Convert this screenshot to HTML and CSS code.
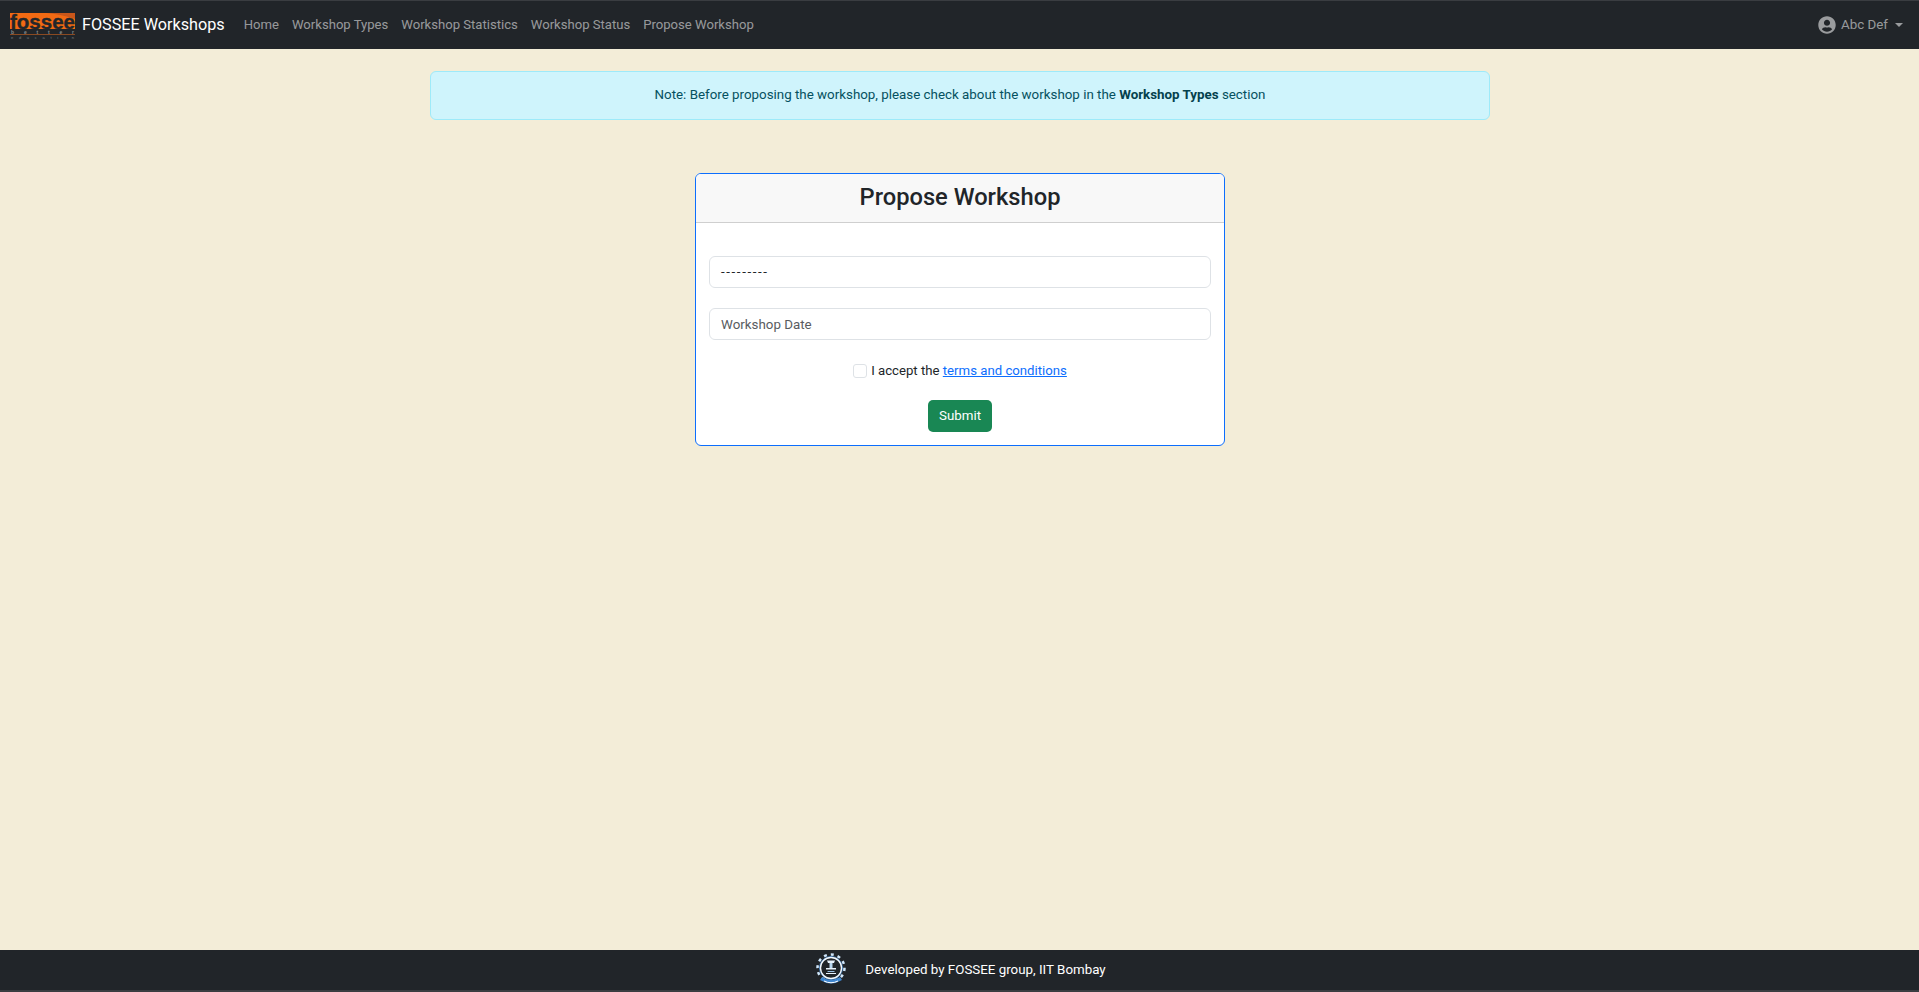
FILE: index.html
```html
<!DOCTYPE html>
<html>
<head>
  <meta charset="UTF-8">
  <title>Propose Workshop</title>
  <link rel="stylesheet" href="styles.css">
</head>
<body>
  <nav class="navbar">
    <a class="brand" href="#">
      <svg class="brand-logo" width="66" height="37" viewBox="0 -6 66 37">
        <rect x="0" y="0" width="65" height="16" fill="#f26a13"/>
        <path d="M36 0 L65 0 L65 6 Q50 1 36 0 Z" fill="#c9561a"/>
        <text x="0" y="16" class="logo-main">fossee</text>
        <rect x="0" y="21" width="65" height="1" fill="#8a4a22"/>
        <text x="1" y="20.5" class="logo-sub" textLength="63">better</text>
        <text x="1" y="25.5" class="logo-tiny" textLength="63">education</text>
      </svg>
      <span>FOSSEE Workshops</span>
    </a>
    <ul class="nav-links">
      <li><a href="#">Home</a></li>
      <li><a href="#">Workshop Types</a></li>
      <li><a href="#">Workshop Statistics</a></li>
      <li><a href="#">Workshop Status</a></li>
      <li><a href="#">Propose Workshop</a></li>
    </ul>
    <a class="user-menu" href="#">
      <svg width="18" height="18" viewBox="0 0 512 512" fill="currentColor">
        <path d="M256 8C119 8 8 119 8 256s111 248 248 248 248-111 248-248S393 8 256 8zm0 96c48.600 0 88 39.400 88 88s-39.400 88-88 88-88-39.400-88-88 39.400-88 88-88zm0 344c-58.700 0-111.300-26.600-146.500-68.200 18.800-35.400 55.600-59.800 98.500-59.800 2.400 0 4.800.4 7.100 1.100 13 4.200 26.600 6.900 40.900 6.900 14.300 0 28-2.700 40.900-6.900 2.300-.7 4.700-1.100 7.100-1.100 42.900 0 79.700 24.400 98.500 59.800C367.300 421.400 314.700 448 256 448z"/>
      </svg>
      <span>Abc Def</span>
      <i class="caret"></i>
    </a>
  </nav>

  <main class="content">
    <div class="alert">Note: Before proposing the workshop, please check about the workshop in the <b>Workshop Types</b> section</div>

    <div class="card">
      <h3 class="card-header">Propose Workshop</h3>
      <form class="card-body">
        <div class="field select-field">---------</div>
        <div class="field date-field">Workshop Date</div>
        <div class="terms">
          <span class="checkbox"></span>
          <span>I accept the <a href="#">terms and conditions</a></span>
        </div>
        <button class="submit" type="button">Submit</button>
      </form>
    </div>
  </main>

  <footer class="footer">
    <svg class="emblem" width="34" height="34" viewBox="0 0 34 34">
      <circle cx="17" cy="15" r="13.5" fill="none" stroke="#cfe6fa" stroke-width="2.500" stroke-dasharray="3 4"/>
      <circle cx="17" cy="15" r="11.500" fill="none" stroke="#3f7fc0" stroke-width="1"/>
      <circle cx="17" cy="15" r="10.500" fill="none" stroke="#f4f9fe" stroke-width="1.400"/>
      <path d="M13 7.500 H21 L20 10 H14 Z" fill="#e8f2fb"/>
      <rect x="15.500" y="10" width="3" height="5" fill="#b9d6ee"/>
      <rect x="12" y="15" width="10" height="1.500" fill="#e8f2fb"/>
      <rect x="13.500" y="18" width="7" height="1" fill="#9cc3e6"/>
      <rect x="12" y="20" width="10" height="1" fill="#e8f2fb"/>
      <path d="M6 27 Q17 34 28 27 L26 24 Q17 30 8 24 Z" fill="#3f86cf"/>
      <path d="M10 28 Q17 31.500 24 28" fill="none" stroke="#ffffff" stroke-width="1"/>
    </svg>
    <span>Developed by FOSSEE group, IIT Bombay</span>
  </footer>
</body>
</html>
```

FILE: styles.css
```css
* {
  box-sizing: border-box;
}
html, body {
  margin: 0;
  height: 100%;
}
body {
  display: flex;
  flex-direction: column;
  min-height: 100vh;
  background-color: #f3edd8;
  color: #212529;
  font-family: Roboto, "Noto Sans", sans-serif;
  font-size: 13.35px;
  line-height: 1.5;
}
a {
  text-decoration: none;
}

.navbar {
  display: flex;
  align-items: center;
  height: 49px;
  padding: 0 16px 0 10px;
  background-color: #212529;
  border-top: 1px solid #3a3d41;
}
.brand {
  display: flex;
  align-items: center;
  gap: 6px;
  margin-right: 19px;
  color: #fff;
  font-size: 16.2px;
  white-space: nowrap;
}
.brand-logo {
  display: block;
}
.logo-main {
  font-family: "Liberation Sans", sans-serif;
  font-weight: 700;
  font-size: 20.5px;
  fill: #23262a;
  stroke: #23262a;
  stroke-width: 0.4px;
}
.logo-sub {
  font-family: "Liberation Sans", sans-serif;
  font-weight: 700;
  font-size: 5px;
  fill: #8a8c8e;
}
.logo-tiny {
  font-family: "Liberation Sans", sans-serif;
  font-size: 4px;
  fill: #7c7e80;
}
.nav-links {
  display: flex;
  gap: 13px;
  margin: 0;
  padding: 0;
  list-style: none;
  font-size: 13.1px;
}
.nav-links a, .user-menu {
  color: rgba(255, 255, 255, 0.55);
}
.user-menu {
  display: flex;
  align-items: center;
  gap: 5px;
  margin-left: auto;
}
.caret {
  width: 0;
  height: 0;
  margin-left: 2px;
  border-top: 4px solid;
  border-left: 4px solid transparent;
  border-right: 4px solid transparent;
}

.content {
  flex: 1;
  padding: 22px 0 0 1px;
}
.alert {
  width: 1060px;
  height: 49px;
  margin: 0 auto 53px;
  padding-top: 13px;
  background-color: #cff4fc;
  border: 1px solid #9eeaf9;
  border-radius: 6px;
  color: #055160;
  text-align: center;
}
.alert b {
  color: #04414d;
}

.card {
  width: 530px;
  height: 273px;
  margin: 0 auto;
  background-color: #fff;
  border: 1px solid #0d6efd;
  border-radius: 6px;
  overflow: hidden;
}
.card-header {
  height: 49px;
  margin: 0;
  background-color: #f8f8f8;
  border-bottom: 1px solid #cfcfcf;
  font-size: 23.7px;
  font-weight: 500;
  line-height: 46px;
  text-align: center;
}
.card-body {
  display: flex;
  flex-direction: column;
  align-items: center;
  padding: 33px 13px 0;
}
.field {
  width: 100%;
  height: 32px;
  margin-bottom: 20px;
  padding: 0 11px;
  border: 1px solid #dee2e6;
  border-radius: 6px;
  line-height: 30px;
}
.select-field {
  letter-spacing: 1.6px;
}
.date-field {
  margin-bottom: 22px;
  padding-top: 1px;
  color: #595c5f;
}
.terms {
  display: flex;
  align-items: center;
  gap: 4px;
  height: 18px;
  margin-bottom: 20px;
  font-size: 13.2px;
}
.terms a {
  color: #0d6efd;
  text-decoration: underline;
}
.checkbox {
  width: 14px;
  height: 14px;
  border: 1px solid #dee2e6;
  border-radius: 3px;
}
.submit {
  width: 64px;
  height: 32px;
  padding: 1px 0 0;
  background-color: #198754;
  border: none;
  border-radius: 5px;
  color: #fff;
  font: inherit;
}

.footer {
  display: flex;
  align-items: center;
  justify-content: center;
  gap: 17px;
  height: 42px;
  padding-left: 1px;
  background-color: #212529;
  border-bottom: 2px solid #3a3d41;
  color: #fff;
}
```
